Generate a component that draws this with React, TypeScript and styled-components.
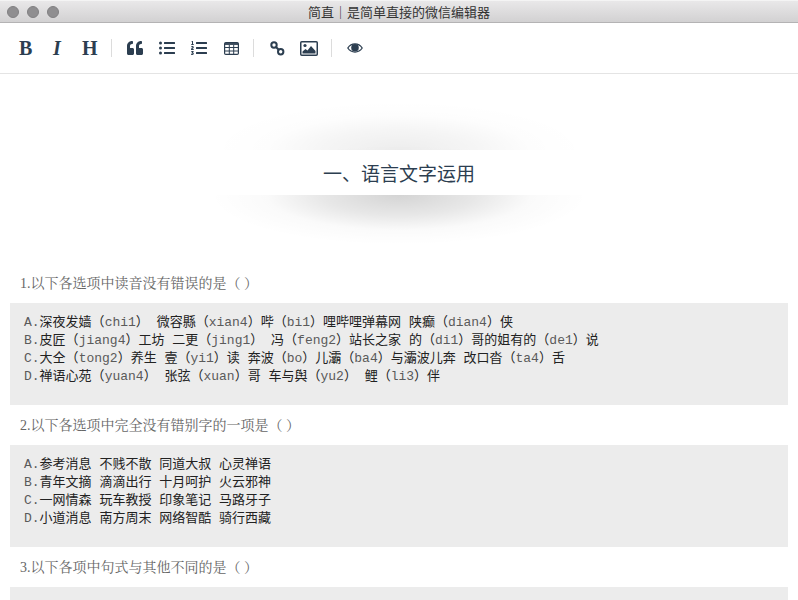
import React from "react";
import styled, { createGlobalStyle } from "styled-components";
import { FaQuoteLeft, FaListUl, FaListOl } from "react-icons/fa";

const Global = createGlobalStyle`
  html, body { margin: 0; padding: 0; background: #fff; }
  body { width: 798px; height: 600px; overflow: hidden; }
`;
const Win = styled.div`
  width: 798px; height: 600px; overflow: hidden; display: flex; flex-direction: column; background: #fff;
`;
const TitleBar = styled.div`
  position: relative; height: 23px; box-sizing: border-box; flex: none;
  background: linear-gradient(#e9e8e9, #d2d1d2);
  border-bottom: 1px solid #b4b3b4; border-top: 1px solid #f4f4f4;
  display: flex; align-items: center; justify-content: center;
  font: 13px "Noto Sans CJK SC", sans-serif; color: #333;
`;
const Lights = styled.div`
  position: absolute; left: 7px; top: 5px; display: flex; gap: 8px;
`;
const Light = styled.span`
  width: 12px; height: 12px; border-radius: 50%; background: #8f8e90; border: 0.5px solid #818082; box-sizing: border-box;
`;
const Toolbar = styled.div`
  height: 51px; flex: none; box-sizing: border-box; border-bottom: 1px solid #e4e4e4;
  display: flex; align-items: center; padding-left: 19px; color: #2c3e50;
`;
const Slot = styled.span<{ $w: number }>`
  width: ${p => p.$w}px; flex: none; display: flex; align-items: center; height: 20px; color: #2c3e50;
`;
const Letter = styled(Slot)<{ $i?: boolean }>`
  font: ${p => (p.$i ? "italic" : "normal")} 700 20px/20px "Liberation Serif", serif;
`;
const Sep = styled.i`
  width: 1px; height: 18px; background: #dcdcdc; margin-right: 15px; display: block; flex: none;
`;
const Doc = styled.div`
  flex: 1; display: flex; flex-direction: column; overflow: hidden;
`;
const Hero = styled.div`
  height: 173px; flex: none; position: relative; overflow: hidden;
`;
const Glow = styled.div<{ $top: number; $a: number }>`
  position: absolute; left: 210px; width: 378px; height: 100px; top: ${p => p.$top}px;
  background: radial-gradient(closest-side, rgba(0,0,0,${p => p.$a}), rgba(0,0,0,${p => p.$a * 0.55}) 40%, rgba(0,0,0,${p => p.$a * 0.12}) 70%, rgba(0,0,0,0) 100%);
`;
const HeroTitle = styled.h1`
  position: relative; z-index: 1; margin: 76px 0 0; height: 45px; background: #fff;
  font: 400 19px/45px "Noto Sans CJK SC", sans-serif; text-align: center; color: #2c3e50;
`;
const Question = styled.p<{ $m: number }>`
  margin: ${p => p.$m}px 0 0 20px; flex: none; font: 14px/22px "Liberation Serif", "Noto Serif CJK SC", "Noto Sans CJK SC", serif; color: #666;
`;
const Code = styled.pre`
  margin: 8px 10px 0; padding: 11px 14px 0; height: 102px; flex: none; box-sizing: border-box; background: #ececec;
  font: 13px/18px "Liberation Mono", "Noto Sans CJK SC", monospace; color: #222;
`;
const Latin = styled.span`
  color: #5a5a5a;
`;

const ic = "#2c3e50";
const Mono = ({ text }: { text: string }) => (
  <Code>
    {text.split(/([A-Za-z0-9.]+)/).map((s, i) => (i % 2 ? <Latin key={i}>{s}</Latin> : s))}
  </Code>
);

export default function App() {
  return (
    <Win>
      <Global />
      <TitleBar>
        <Lights><Light /><Light /><Light /></Lights>
        简直｜是简单直接的微信编辑器
      </TitleBar>
      <Toolbar>
        <Letter $w={34}>B</Letter>
        <Letter $w={29} $i>I</Letter>
        <Letter $w={29}>H</Letter>
        <Sep />
        <Slot $w={32}><FaQuoteLeft size={16} /></Slot>
        <Slot $w={32}><FaListUl size={16} /></Slot>
        <Slot $w={33}><FaListOl size={16} /></Slot>
        <Slot $w={29}>
          <svg width="15" height="13" viewBox="0 0 15 13" fill="none" stroke={ic}>
            <rect x=".6" y=".6" width="13.800" height="11.800" rx="1.200" strokeWidth="1.200" />
            <path strokeWidth="1.800" d="M1 2h13" />
            <path strokeWidth="1" d="M1 5.500h13M1 9h13M5.300 3v9M9.700 3v9" />
          </svg>
        </Slot>
        <Sep />
        <Slot $w={31}>
          <svg width="16" height="15" viewBox="-1 0 16 15" fill="none" stroke={ic} strokeWidth="2">
            <circle cx="4" cy="4" r="2.700" />
            <circle cx="10.700" cy="10.700" r="2.700" />
            <path d="M6 6l2.700 2.700" />
          </svg>
        </Slot>
        <Slot $w={31}>
          <svg width="18" height="15" viewBox="0 0 18 15">
            <rect x=".75" y=".75" width="16.500" height="13.500" rx="1" fill="none" stroke={ic} strokeWidth="1.500" />
            <circle cx="5" cy="4.500" r="1.600" fill={ic} />
            <path fill={ic} d="M2.500 12.500v-2l3-2.500 2 1.500 3.500-4.500 4.500 5v2.500z" />
          </svg>
        </Slot>
        <Sep />
        <Slot $w={17}>
          <svg width="16" height="12" viewBox="0 0 16 12">
            <path fill="none" stroke={ic} strokeWidth="1.300" d="M.8 6C4.500.6 11.500.6 15.200 6 11.500 11.400 4.500 11.400.8 6z" />
            <circle cx="8" cy="5.700" r="3.800" fill={ic} />
          </svg>
        </Slot>
      </Toolbar>
      <Doc>
        <Hero>
          <Glow $top={26} $a={0.07} />
          <Glow $top={71} $a={0.17} />
          <HeroTitle>一、语言文字运用</HeroTitle>
        </Hero>
        <Question $m={26}>1.以下各选项中读音没有错误的是（ ）</Question>
        <Mono text={`A.深夜发嫱（chi1） 微容縣（xian4）哔（bi1）哩哔哩弹幕网 陕癫（dian4）侠
B.皮匠（jiang4）工坊 二更（jing1） 冯（feng2）站长之家 的（di1）哥的姐有的（de1）说
C.大仝（tong2）养生 壹（yi1）读 奔波（bo）儿灞（ba4）与灞波儿奔 改口沓（ta4）舌
D.禅语心苑（yuan4） 张弦（xuan）哥 车与舆（yu2） 鲤（li3）伴`} />
        <Question $m={10}>2.以下各选项中完全没有错别字的一项是（ ）</Question>
        <Mono text={`A.参考消息 不贱不散 同道大叔 心灵禅语
B.青年文摘 滴滴出行 十月呵护 火云邪神
C.一网情森 玩车教授 印象笔记 马路牙子
D.小道消息 南方周末 网络智酷 骑行西藏`} />
        <Question $m={10}>3.以下各项中句式与其他不同的是（ ）</Question>
        <Code />
      </Doc>
    </Win>
  );
}
